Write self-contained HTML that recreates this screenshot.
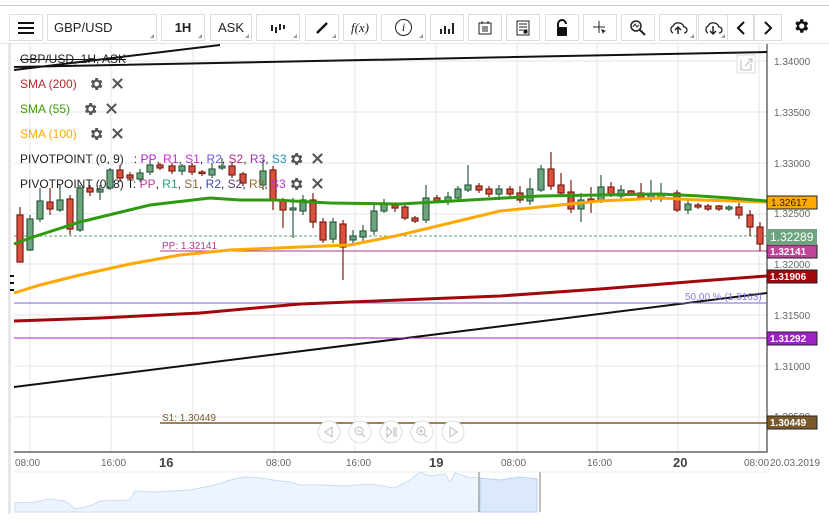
<!DOCTYPE html>
<html><head><meta charset="utf-8"><style>
body{margin:0;width:829px;height:523px;background:#fff;font-family:"Liberation Sans",sans-serif;overflow:hidden;position:relative}
.tb{position:absolute;top:5px;left:0;width:829px;height:1px;background:#ccc}
.b{position:absolute;top:14px;height:27px;border:1px solid #ddd;box-sizing:border-box;font-size:13px;color:#222;display:flex;align-items:center;justify-content:center}
.b:after{content:"";position:absolute;right:2px;bottom:2px;border-left:4px solid transparent;border-bottom:4px solid #999}
.n:after{display:none}
.leg{position:absolute;left:20px;font-size:12px;color:#222;display:flex;align-items:center;white-space:pre}
.ic{margin-left:8px;display:inline-block;width:14px;height:14px}
</style></head><body>
<div class="tb"></div>
<div class="b n" style="left:9px;width:34px"><svg width="18" height="14"><path d="M1 2H17M1 7H17M1 12H17" stroke="#111" stroke-width="2"/></svg></div>
<div class="b" style="left:47px;width:110px;justify-content:flex-start;padding-left:6px">GBP/USD</div>
<div class="b" style="left:161px;width:44px;font-weight:bold">1H</div>
<div class="b" style="left:210px;width:42px">ASK</div>
<div class="b" style="left:256px;width:44px"><svg width="16" height="12"><path d="M2 3V9M6 5V11M10 2V8M14 3V7" stroke="#222" stroke-width="2"/></svg></div>
<div class="b" style="left:305px;width:34px"><svg width="14" height="14"><path d="M2 12L12 2" stroke="#111" stroke-width="2.5"/></svg></div>
<div class="b n" style="left:343px;width:34px;font-family:'Liberation Serif',serif;font-style:italic">f(x)</div>
<div class="b" style="left:381px;width:45px;font-family:'Liberation Serif',serif;font-style:italic"><span style="border:1.5px solid #222;border-radius:50%;width:15px;height:15px;display:inline-block;text-align:center;line-height:15px;font-size:12px">i</span></div>
<div class="b n" style="left:430px;width:34px"><svg width="16" height="14"><path d="M2 13V8M6 13V5M10 13V8M14 13V2" stroke="#222" stroke-width="2"/></svg></div>
<div class="b n" style="left:468px;width:34px"><svg width="16" height="16"><rect x="2" y="3" width="12" height="11" fill="none" stroke="#222"/><path d="M5 1V4M11 1V4M5 7H11M5 9H11M5 11H11" stroke="#222"/></svg></div>
<div class="b n" style="left:506px;width:34px"><svg width="14" height="16"><rect x="1" y="1" width="12" height="14" fill="none" stroke="#222"/><path d="M3 4H11M3 7H11M3 10H7M8 10H11V13H8Z" stroke="#222"/></svg></div>
<div class="b n" style="left:545px;width:34px"><svg width="14" height="18"><path d="M3 8V5A4 4 0 0 1 11 5" fill="none" stroke="#111" stroke-width="2"/><rect x="2" y="8" width="10" height="9" rx="1" fill="#111"/></svg></div>
<div class="b n" style="left:583px;width:34px"><svg width="16" height="16"><path d="M1 7H13M7 1V13" stroke="#222"/><path d="M9 9L14 11L12 12L11 14Z" fill="#222"/></svg></div>
<div class="b n" style="left:621px;width:34px"><svg width="18" height="18"><circle cx="7" cy="7" r="5" fill="none" stroke="#222" stroke-width="1.5"/><path d="M11 11L16 16" stroke="#222" stroke-width="2"/><path d="M4 8L6 5L8 8L10 6" fill="none" stroke="#222"/></svg></div>
<div class="b" style="left:659px;width:38px"><svg width="20" height="16"><path d="M5 13A4 4 0 0 1 5 6A6 6 0 0 1 16 7A3 3 0 0 1 16 13" fill="none" stroke="#222" stroke-width="1.3"/><path d="M10 14V7M7 10L10 7L13 10" fill="none" stroke="#222" stroke-width="1.5"/></svg></div>
<div class="b" style="left:698px;width:30px"><svg width="20" height="16"><path d="M5 13A4 4 0 0 1 5 6A6 6 0 0 1 16 7A3 3 0 0 1 16 13" fill="none" stroke="#222" stroke-width="1.3"/><path d="M10 6V14M7 11L10 14L13 11" fill="none" stroke="#222" stroke-width="1.5"/></svg></div>
<div class="b n" style="left:727px;width:27px"><svg width="10" height="16"><path d="M8 2L2 8L8 14" fill="none" stroke="#111" stroke-width="2"/></svg></div>
<div class="b n" style="left:754px;width:28px"><svg width="10" height="16"><path d="M2 2L8 8L2 14" fill="none" stroke="#111" stroke-width="2"/></svg></div>
<div style="position:absolute;left:792px;top:17px"><svg width="18" height="18" viewBox="0 0 24 24"><path fill="#111" d="M19.4 13a7.5 7.5 0 0 0 0-2l2.1-1.6-2-3.5-2.5 1a7.6 7.6 0 0 0-1.7-1L15 3h-4l-.4 2.7a7.6 7.6 0 0 0-1.7 1l-2.5-1-2 3.5L6.6 11a7.5 7.5 0 0 0 0 2l-2.1 1.6 2 3.5 2.5-1a7.6 7.6 0 0 0 1.7 1L11 21h4l.4-2.7a7.6 7.6 0 0 0 1.7-1l2.5 1 2-3.5zM13 15.5a3.5 3.5 0 1 1 0-7 3.5 3.5 0 0 1 0 7z"/></svg></div>
<div style="position:absolute;left:0;top:43px;width:829px;height:1px;background:#e4e4e4"></div>

<svg width="829" height="523" style="position:absolute;left:0;top:0" font-family="Liberation Sans, sans-serif">
<defs>
<symbol id="g" viewBox="0 0 24 24"><path fill="#555" d="M19.4 13a7.5 7.5 0 0 0 0-2l2.1-1.6-2-3.5-2.5 1a7.6 7.6 0 0 0-1.7-1L15 3h-4l-.4 2.7a7.6 7.6 0 0 0-1.7 1l-2.5-1-2 3.5L6.6 11a7.5 7.5 0 0 0 0 2l-2.1 1.6 2 3.5 2.5-1a7.6 7.6 0 0 0 1.7 1L11 21h4l.4-2.7a7.6 7.6 0 0 0 1.7-1l2.5 1 2-3.5zM13 15.5a3.5 3.5 0 1 1 0-7 3.5 3.5 0 0 1 0 7z"/></symbol>
<symbol id="x" viewBox="0 0 14 14"><path d="M2 2L12 12M12 2L2 12" stroke="#555" stroke-width="2.2"/></symbol>
</defs>
<rect x="8" y="44" width="3" height="470" fill="#e8e8e8"/>
<g stroke="#e6e6e6" stroke-width="1">
<path d="M30 44V452M111 44V452M193 44V452M274 44V452M355 44V452M436 44V452M517 44V452M597 44V452M678 44V452M759 44V452"/>
<path d="M14 61H767M14 112H767M14 163H767M14 214H767M14 264H767M14 315H767M14 366H767M14 417H767"/>
</g>
<path d="M767 44V452H14" fill="none" stroke="#444" stroke-width="1.2"/>
<rect x="737" y="55" width="18" height="18" fill="#fff" stroke="#ddd"/>
<path d="M741 60V70H751V64M745 66L752 59M748 59H752V63" fill="none" stroke="#bbb"/>
<path d="M14 70L220 45M14 67L767 52" stroke="#111" stroke-width="2"/>
<path d="M14 387L767 293" stroke="#111" stroke-width="2"/>
<path d="M14 236H767" stroke="#5aa57a" stroke-dasharray="3,2"/>
<path d="M160 251H767" stroke="#b03a8a"/>
<path d="M14 303H767" stroke="#7a6ad0"/>
<path d="M14 338H767" stroke="#a020c8"/>
<path d="M160 423H767" stroke="#7a5a2a" stroke-width="1.5"/>
<text x="162" y="249" font-size="10" fill="#b03a8a">PP: 1.32141</text>
<text x="162" y="421" font-size="10" fill="#7a5a2a">S1: 1.30449</text>
<text x="685" y="300" font-size="10" fill="#8a7ae0">50.00 % (1.3163)</text>
<g stroke-width="1.2">
<g fill="#d9503f" stroke="#7a1e14">
<path d="M20 207V262M50 188V215M70 195V235M90 185V196M120 165V182M130 172V180M160 163V170M172 163V174M192 163V175M202 170V176M232 163V178M243 172V186M273 166V210M283 198V228M313 193V228M323 218V243M343 220V280M395 203V212M405 204V220M415 216V223M437 195V203M479 183V193M489 186V197M510 186V197M520 186V203M551 152V190M561 173V196M571 180V213M591 187V213M611 182V197M631 190V196M641 183V200M677 190V212M698 203V209M708 204V211M719 205V211M739 203V219M750 210V236M760 222V251"/>
<rect x="17" y="215" width="6" height="47"/><rect x="47" y="202" width="6" height="7"/><rect x="67" y="199" width="6" height="30"/><rect x="87" y="188" width="6" height="4"/><rect x="117" y="170" width="6" height="8"/><rect x="127" y="175" width="6" height="3"/><rect x="157" y="165" width="6" height="3"/><rect x="169" y="166" width="6" height="5"/><rect x="189" y="166" width="6" height="6"/><rect x="199" y="172" width="6" height="1.5"/><rect x="229" y="166" width="6" height="9"/><rect x="240" y="174" width="6" height="9"/><rect x="270" y="170" width="6" height="30"/><rect x="280" y="200" width="6" height="10"/><rect x="310" y="200" width="6" height="22"/><rect x="320" y="222" width="6" height="18"/><rect x="340" y="224" width="6" height="23"/><rect x="392" y="205" width="6" height="3"/><rect x="402" y="207" width="6" height="11"/><rect x="412" y="218" width="6" height="3"/><rect x="434" y="198" width="6" height="3"/><rect x="476" y="186" width="6" height="4"/><rect x="486" y="189" width="6" height="5"/><rect x="507" y="189" width="6" height="5"/><rect x="517" y="193" width="6" height="7"/><rect x="548" y="169" width="6" height="17"/><rect x="558" y="185" width="6" height="8"/><rect x="568" y="192" width="6" height="17"/><rect x="588" y="199" width="6" height="3"/><rect x="608" y="187" width="6" height="7"/><rect x="628" y="191" width="6" height="3"/><rect x="638" y="193" width="6" height="5"/><rect x="674" y="193" width="6" height="17"/><rect x="695" y="205" width="6" height="2"/><rect x="705" y="206" width="6" height="3"/><rect x="716" y="206" width="6" height="3"/><rect x="736" y="207" width="6" height="8"/><rect x="747" y="215" width="6" height="12"/><rect x="757" y="227" width="6" height="17"/>
</g>
<g fill="#6aa57f" stroke="#2e5e40">
<path d="M30 215V251M40 188V222M60 185V212M80 185V232M100 185V200M110 168V190M140 169V182M150 160V175M182 164V175M212 163V178M222 158V170M263 160V190M293 198V238M303 195V215M333 218V243M353 230V245M363 225V242M374 205V235M384 199V213M426 185V223M448 192V205M458 186V201M468 165V192M499 185V200M530 178V205M541 165V192M581 193V222M601 175V203M621 185V200M651 180V202M661 183V202M688 200V214M729 205V211"/>
<rect x="27" y="219" width="6" height="31"/><rect x="37" y="201" width="6" height="18"/><rect x="57" y="200" width="6" height="10"/><rect x="77" y="188" width="6" height="42"/><rect x="97" y="189" width="6" height="3"/><rect x="107" y="170" width="6" height="18"/><rect x="137" y="173" width="6" height="6"/><rect x="147" y="165" width="6" height="7"/><rect x="179" y="166" width="6" height="5"/><rect x="209" y="169" width="6" height="6"/><rect x="219" y="166" width="6" height="2"/><rect x="260" y="171" width="6" height="14"/><rect x="290" y="208" width="6" height="2"/><rect x="300" y="200" width="6" height="11"/><rect x="330" y="222" width="6" height="17"/><rect x="350" y="236" width="6" height="4"/><rect x="360" y="231" width="6" height="6"/><rect x="371" y="211" width="6" height="20"/><rect x="381" y="203" width="6" height="8"/><rect x="423" y="198" width="6" height="22"/><rect x="445" y="197" width="6" height="5"/><rect x="455" y="189" width="6" height="9"/><rect x="465" y="185" width="6" height="5"/><rect x="496" y="189" width="6" height="5"/><rect x="527" y="189" width="6" height="12"/><rect x="538" y="169" width="6" height="21"/><rect x="578" y="200" width="6" height="9"/><rect x="598" y="187" width="6" height="14"/><rect x="618" y="190" width="6" height="6"/><rect x="648" y="194" width="6" height="5"/><rect x="658" y="194" width="6" height="5"/><rect x="685" y="204" width="6" height="6"/><rect x="726" y="207" width="6" height="2"/>
</g></g>
<path d="M14 293L40 285L80 275L130 264L180 255L230 250L300 247L350 245L400 235L450 223L500 211L540 207L600 201L660 198L700 200L767 202" fill="none" stroke="#ffa800" stroke-width="3"/>
<path d="M14 244L30 238L80 222L150 205L210 198L240 200L275 200L330 203L400 204L470 200L540 196L600 195L660 194L700 196L730 198L767 201" fill="none" stroke="#2f9a10" stroke-width="3"/>
<path d="M14 321L100 318L200 313L300 304L400 300L500 296L600 289L700 281L767 276" fill="none" stroke="#a0080e" stroke-width="3"/>
<path d="M10 276H14M10 283H14M10 290H14" stroke="#111" stroke-width="2"/>
<g font-size="10" fill="#666">
<text x="774" y="65">1.34000</text><text x="774" y="116">1.33500</text><text x="774" y="167">1.33000</text><text x="774" y="217">1.32500</text><text x="774" y="268">1.32000</text><text x="774" y="319">1.31500</text><text x="774" y="370">1.31000</text><text x="774" y="420">1.30500</text>
</g>
<g font-size="10" font-weight="bold" fill="#fff">
<rect x="767" y="196" width="50" height="13" fill="#ffa800" stroke="#222"/><text x="771" y="206" fill="#222" font-weight="normal">1.32617</text>
<rect x="767" y="229" width="50" height="15" fill="#6aa57f"/><text x="770" y="241" font-size="12" font-weight="normal">1.32289</text>
<rect x="767" y="245" width="50" height="13" fill="#c0449a" stroke="#222"/><text x="770" y="255">1.32141</text>
<rect x="767" y="270" width="50" height="13" fill="#a0080e" stroke="#222"/><text x="770" y="280">1.31906</text>
<rect x="767" y="332" width="50" height="13" fill="#a020c8" stroke="#222"/><text x="770" y="342">1.31292</text>
<rect x="767" y="416" width="50" height="13" fill="#7a5a2a" stroke="#222"/><text x="770" y="426">1.30449</text>
</g>
<g fill="#fff" stroke="#ddd"><circle cx="329" cy="432" r="11"/><circle cx="360" cy="432" r="11"/><circle cx="391" cy="432" r="11"/><circle cx="422" cy="432" r="11"/><circle cx="453" cy="432" r="11"/></g>
<g fill="none" stroke="#bbb"><path d="M332 427L325 432L332 437Z"/><circle cx="359" cy="431" r="4"/><path d="M357 431H361M362 434L365 437"/><path d="M387 427L392 432L387 437ZM394 427V437M396 427V437"/><circle cx="421" cy="431" r="4"/><path d="M419 431H423M421 429V433M424 434L427 437"/><path d="M450 427L457 432L450 437Z"/></g>
<g font-size="10" fill="#666"><text x="15" y="466">08:00</text><text x="101" y="466">16:00</text><text x="266" y="466">08:00</text><text x="346" y="466">16:00</text><text x="501" y="466">08:00</text><text x="587" y="466">16:00</text><text x="744" y="466">08:00</text><text x="770" y="466">20.03.2019</text></g>
<g font-size="13" font-weight="bold" fill="#444"><text x="159" y="467">16</text><text x="429" y="467">19</text><text x="673" y="467">20</text></g>
<path d="M14 472H767" stroke="#eee"/>
<path d="M15 512L15 503L35 502L50 499L65 501L75 509L90 506L100 501L130 500L135 491L155 492L190 490L215 485L230 480L245 477L260 478L280 481L290 482L300 485L320 485L345 486L370 484L395 488L410 480L420 472L430 476L445 474L450 482L455 473L470 478L480 477L478 512Z" fill="#eef4fd" stroke="#c8dcf6"/>
<path d="M480 512V478L500 480L520 477L537 479V512Z" fill="#dce9fb" stroke="#b8d0f3"/>
<path d="M479 472V512M540 472V512" stroke="#aaa" stroke-width="1.5"/>
<g>
<use href="#g" x="88" y="76" width="16" height="16"/><use href="#x" x="111" y="77" width="13" height="13"/>
<use href="#g" x="82" y="101" width="16" height="16"/><use href="#x" x="105" y="102" width="13" height="13"/>
<use href="#g" x="88" y="126" width="16" height="16"/><use href="#x" x="111" y="127" width="13" height="13"/>
<use href="#g" x="288" y="151" width="16" height="16"/><use href="#x" x="311" y="152" width="13" height="13"/>
<use href="#g" x="288" y="176" width="16" height="16"/><use href="#x" x="311" y="177" width="13" height="13"/>
</g>
</svg>

<div class="leg" style="top:52px;text-decoration:line-through;text-decoration-color:#111">GBP/USD, 1H, ASK</div>
<div class="leg" style="top:77px;color:#b22a2a">SMA (200)</div>
<div class="leg" style="top:102px;color:#3a9a10">SMA (55)</div>
<div class="leg" style="top:127px;color:#ffa800">SMA (100)</div>
<div class="leg" style="top:152px">PIVOTPOINT (0, 9)   : <span style="color:#b020e0">PP</span>, <span style="color:#e020e0">R1</span>, <span style="color:#c030d0">S1</span>, <span style="color:#6a5ae0">R2</span>, <span style="color:#c02080">S2</span>, <span style="color:#a030c0">R3</span>, <span style="color:#2090c0">S3</span></div>
<div class="leg" style="top:177px">PIVOTPOINT (0, 8) T: <span style="color:#c03a9a">PP</span>, <span style="color:#2aa070">R1</span>, <span style="color:#8a6a3a">S1</span>, <span style="color:#3a4ab0">R2</span>, <span style="color:#5a3a6a">S2</span>, <span style="color:#9a6a2a">R3</span>, <span style="color:#c030d0">S3</span></div>
</body></html>
